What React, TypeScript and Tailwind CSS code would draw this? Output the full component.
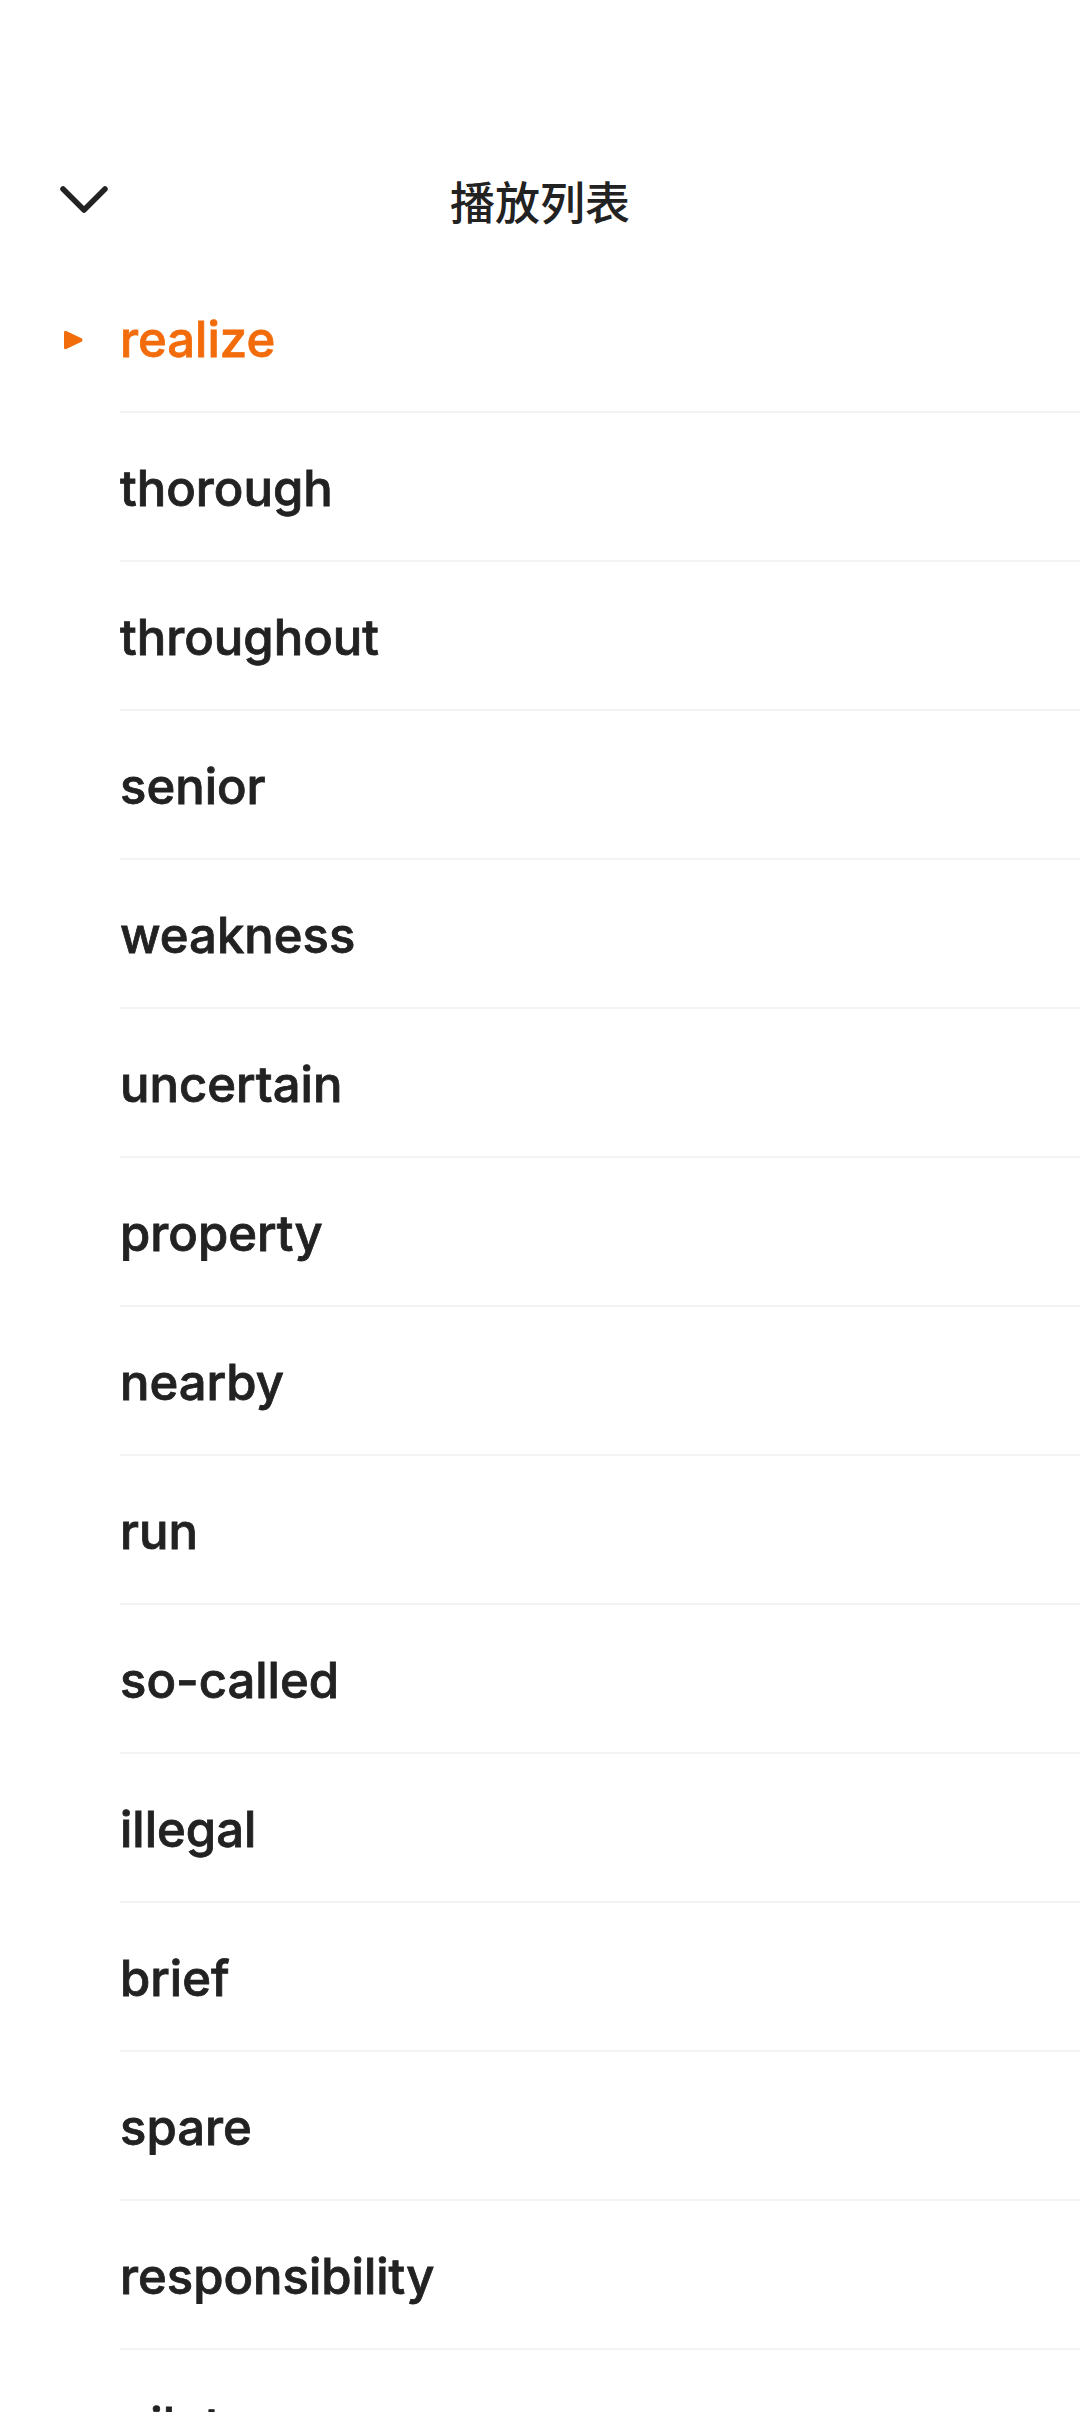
import React from "react";

const words = [
  "realize",
  "thorough",
  "throughout",
  "senior",
  "weakness",
  "uncertain",
  "property",
  "nearby",
  "run",
  "so-called",
  "illegal",
  "brief",
  "spare",
  "responsibility",
  "pilot",
];

export default function App() {
  return (
    <div
      className="w-[1080px] h-[2412px] overflow-hidden bg-white text-[#222222]"
      style={{ fontFamily: "Inter, 'Noto Sans', sans-serif" }}
    >
      <div className="pt-[136px]">
        <div className="grid grid-cols-[1fr_auto_1fr] items-center h-[128px]">
          <div className="pl-[58px] flex items-center">
            <svg width="52" height="32" viewBox="0 0 52 32" fill="none">
              <path
                d="M5 5 L26 26 L47 5"
                stroke="#222222"
                strokeWidth="5.5"
                strokeLinecap="round"
                strokeLinejoin="round"
              />
            </svg>
          </div>
          <div
            className="text-[45px] leading-none font-medium"
            style={{ fontFamily: "'Noto Sans CJK SC', 'Noto Sans', sans-serif" }}
          >
            播放列表
          </div>
          <div />
        </div>
      </div>
      <div className="flex flex-col">
        {words.map((w, i) => (
          <div key={w} className="flex h-[149px]">
            <div className="w-[120px] shrink-0 flex items-center pl-[61px] pt-[2px]">
              {i === 0 && (
                <svg width="24" height="22" viewBox="0 0 24 22">
                  <path
                    d="M3 3.5 Q3 1.2 5.2 2.1 L20.5 9.2 Q22.5 11 20.5 12.8 L5.2 19.9 Q3 20.8 3 18.5 Z"
                    fill="#f36c0b"
                  />
                </svg>
              )}
            </div>
            <div className="flex-1 flex items-center border-b-2 border-[#f3f3f3] pt-[3px]">
              <span
                className={
                  "text-[49px] leading-none font-medium [-webkit-text-stroke:0.8px_currentColor] " +
                  (i === 0 ? "text-[#f36c0b]" : "text-[#222222]")
                }
              >
                {w}
              </span>
            </div>
          </div>
        ))}
      </div>
    </div>
  );
}
